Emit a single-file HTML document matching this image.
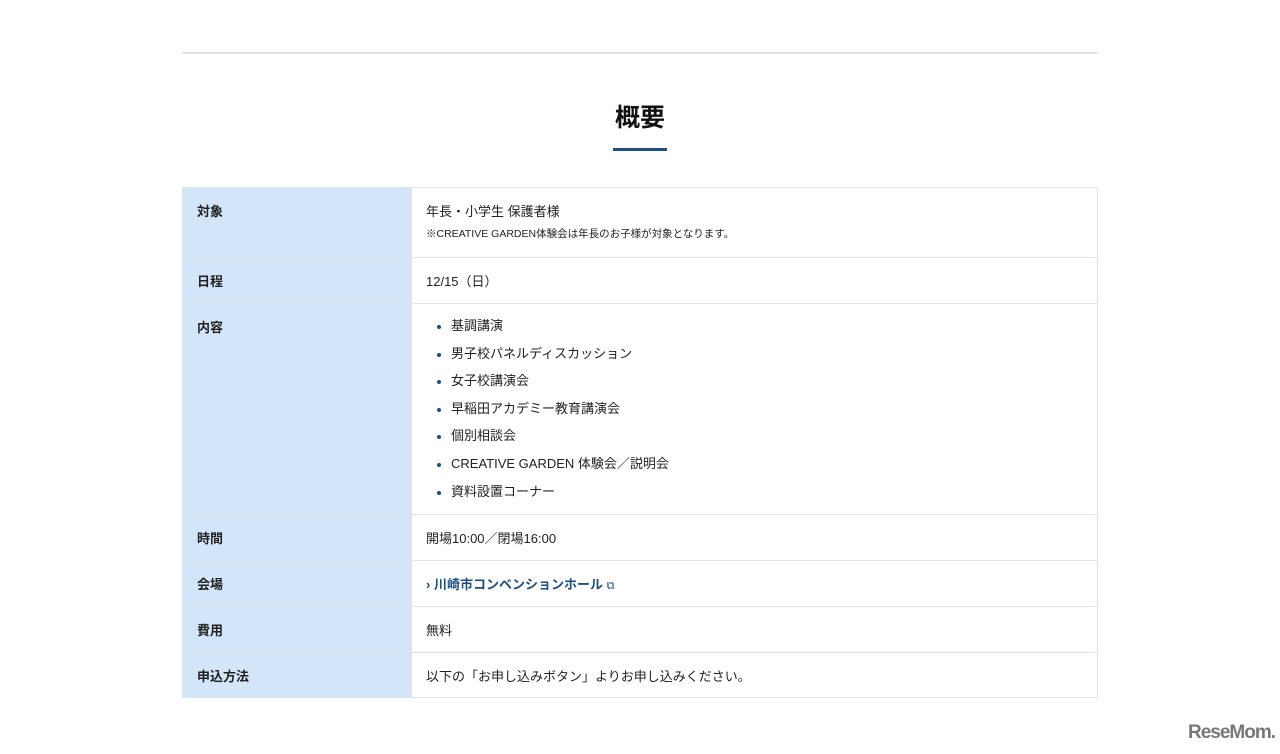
<!DOCTYPE html>
<html><head><meta charset="utf-8"><style>
body{margin:0;background:#fff;font-family:"Liberation Sans","Noto Sans CJK JP",sans-serif;color:#222;}
.top{position:absolute;left:182px;top:52px;width:916px;height:2px;background:#e3e3e3}
h2{position:absolute;left:0;width:1280px;top:101px;margin:0;text-align:center;font-size:25px;font-weight:bold;line-height:34px;color:#111}
.ul{position:absolute;left:613px;top:148px;width:54px;height:3px;background:#1d4f80}
table{position:absolute;left:182px;top:187px;width:916px;border-collapse:collapse;font-size:13px}
td{border:1px solid #dde4ec;vertical-align:top;padding:0 14px}
td.l{width:200px;background:#d3e5f8;font-weight:bold;padding-top:13px;}
td.r{padding-top:13px}
ul{margin:0;padding:0;list-style:none}
li{list-style:none;height:27.6px;position:relative;padding-left:39px;line-height:16px}
li:before{content:"";position:absolute;left:25px;top:7px;width:4px;height:4px;border-radius:50%;background:#1d4f80}
a{color:#1d4f80;font-weight:bold;text-decoration:none}
.logo{position:absolute;left:1188px;top:722px;font-size:19px;font-weight:bold;color:#777;letter-spacing:-1px}
</style></head><body>
<div class="top"></div>
<h2>概要</h2><div class="ul"></div>
<table>
<tr style="height:70px"><td class="l">対象</td><td class="r">年長・小学生 保護者様<div style="font-size:10.5px;margin-top:6px">※CREATIVE GARDEN体験会は年長のお子様が対象となります。</div></td></tr>
<tr style="height:46px"><td class="l">日程</td><td class="r">12/15（日）</td></tr>
<tr style="height:211px"><td class="l">内容</td><td class="r" style="padding-left:0;padding-top:14px"><ul>
<li>基調講演</li><li>男子校パネルディスカッション</li><li>女子校講演会</li><li>早稲田アカデミー教育講演会</li><li>個別相談会</li><li>CREATIVE GARDEN 体験会／説明会</li><li>資料設置コーナー</li></ul></td></tr>
<tr style="height:46px"><td class="l">時間</td><td class="r">開場10:00／閉場16:00</td></tr>
<tr style="height:46px"><td class="l">会場</td><td class="r"><a>&#8250; 川崎市コンベンションホール <span style="font-weight:normal;font-size:11px">⧉</span></a></td></tr>
<tr style="height:46px"><td class="l">費用</td><td class="r">無料</td></tr>
<tr style="height:45px"><td class="l">申込方法</td><td class="r">以下の「お申し込みボタン」よりお申し込みください。</td></tr>
</table>
<div class="logo">ReseMom.</div>
</body></html>
